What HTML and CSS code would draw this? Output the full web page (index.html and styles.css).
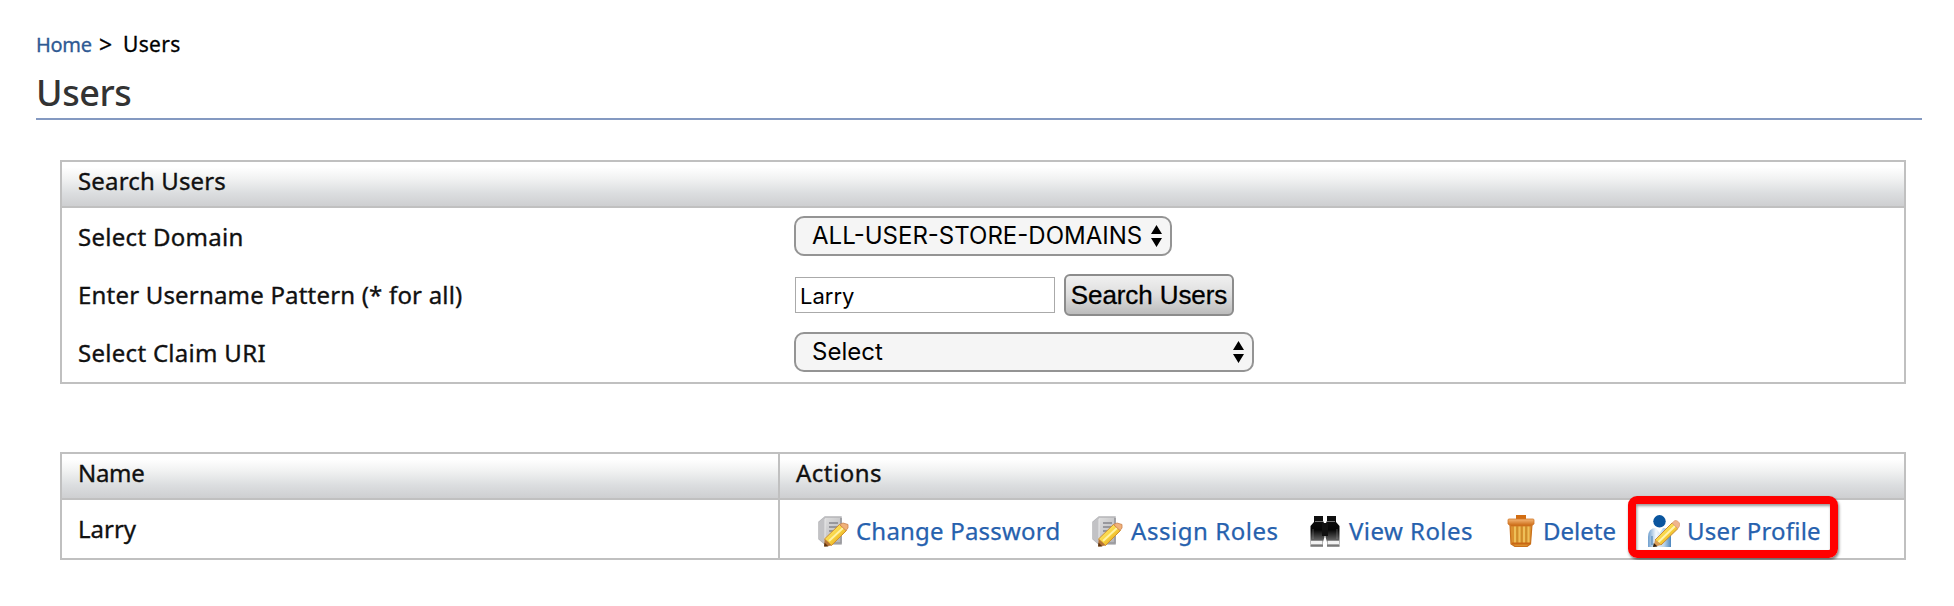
FILE: index.html
```
<!DOCTYPE html>
<html lang="en">
<head>
<meta charset="utf-8">
<title>Users</title>
<link rel="stylesheet" href="styles.css">
</head>
<body>
<svg class="defs" aria-hidden="true">
  <defs>
    <linearGradient id="paper" x1="0" y1="0" x2="1" y2="1"><stop offset="0" stop-color="#e6e6e6"/><stop offset="1" stop-color="#b0b0b4"/></linearGradient>
    <linearGradient id="pencil" x1="0" y1="0" x2="1" y2="1"><stop offset="0" stop-color="#fff3a0"/><stop offset=".5" stop-color="#f8d33c"/><stop offset="1" stop-color="#d98a18"/></linearGradient>
    <linearGradient id="tube" x1="0" y1="0" x2="0" y2="1"><stop offset="0" stop-color="#111"/><stop offset=".45" stop-color="#050505"/><stop offset="1" stop-color="#9c9c9c"/></linearGradient>
    <linearGradient id="lid" x1="0" y1="0" x2="0" y2="1"><stop offset="0" stop-color="#f5b878"/><stop offset="1" stop-color="#c8640c"/></linearGradient>
    <linearGradient id="coat" x1="0" y1="0" x2="1" y2="0"><stop offset="0" stop-color="#6f9fce"/><stop offset=".35" stop-color="#f4f9fd"/><stop offset=".7" stop-color="#b9d3ea"/><stop offset="1" stop-color="#4b86bf"/></linearGradient>
    <symbol id="edit" viewBox="0 0 32 32">
      <path d="M8 2H24V29H8L2 24V7Z" fill="url(#paper)" stroke="#b5b5b8" stroke-width="1.5"/>
      <path d="M8 2V29L2 24V7Z" fill="#c2c2c5"/>
      <path d="M8 4V26" stroke="#e8e8e8"/>
      <path d="M12 8H21M12 12H21M12 16H18" stroke="#85858c" stroke-width="1.5"/>
      <path d="M24 3V28H9" fill="none" stroke="#98989c" stroke-width="1.5"/>
      <path d="M7.500 24L22.500 9.500L29.500 15.500L14.500 30.500Z" fill="url(#pencil)" stroke="#d0912e"/>
      <path d="M12 26L26 13" stroke="#fff2a4" stroke-width="2"/>
      <path d="M22.500 9.500L26 8L31 9.500L31 13L29 15.500Z" fill="#f0b17a" stroke="#c9824e" stroke-width=".8"/>
      <path d="M7.500 24L14.500 30.500L7.500 31.500Z" fill="#b87535"/><path d="M7.500 27.500L11.500 31.500H7Z" fill="#5e3410"/>
    </symbol>
    <symbol id="view" viewBox="0 0 32 32">
      <path d="M5 1H14V6L15.500 9V22L14 27V31.500H1.500V11L5 7Z" fill="url(#tube)"/>
      <path d="M27 1H18V6L16.500 9V22L18 27V31.500H30.500V11L27 7Z" fill="url(#tube)"/>
      <path d="M13 8H19V21H13Z" fill="#111"/><path d="M6 6.500H14M18 6.500H26" stroke="#777"/>
      <path d="M2 27.500H13.500M18.500 27.500H30" stroke="#f2f2f2" stroke-width="3.500"/>
      <path d="M1.500 31H14M18 31H30.500" stroke="#5e5e5e" stroke-width="1.200"/>
      <path d="M4 14V24M28 14V24" stroke="#aaa" stroke-opacity=".4"/>
    </symbol>
    <symbol id="trash" viewBox="0 0 28 32">
      <path d="M9 0H19V5H9Z" fill="#d26d12"/>
      <path d="M3 9H25L23.500 29L20 31.500H8L4 29Z" fill="#dc912f" stroke="#c9701b" stroke-width="1.200"/>
      <path d="M8 11V28M12.500 11V28M17 11V28M21.500 11V28" stroke="#eebf58" stroke-width="2"/>
      <path d="M10.200 11V28M14.700 11V28M19.200 11V28" stroke="#c98d2b"/>
      <path d="M1 5Q1 4 2 4H26Q27 4 27 5V9L24 11H4L1 9Z" fill="url(#lid)" stroke="#d1772a" stroke-width=".8"/>
      <path d="M5 28.500H23" stroke="#c96714" stroke-width="2"/>
    </symbol>
    <symbol id="profile" viewBox="0 0 32 32">
      <path d="M0 32V22Q0 13 8 13H16Q23 14 23 21V32Z" fill="url(#coat)"/>
      <path d="M4 30V21" stroke="#3f7ab2" stroke-width="1"/>
      <path d="M8 13H15L11.500 18Z" fill="#fff"/>
      <circle cx="11.500" cy="6.300" r="6.200" fill="#0a559e"/>
      <path d="M7 25L24 8L30 13.500L13 30Z" fill="url(#pencil)" stroke="#c98c35"/>
      <path d="M10.500 27L27 11" stroke="#fff3ae" stroke-width="2"/>
      <path d="M24 8L27 5.500Q31 5.500 32 10L30 13.500Z" fill="#f1b58c" stroke="#dba27e" stroke-width=".8"/>
      <path d="M7 25L13 30L5.500 32Z" fill="#d99c55"/><path d="M5.800 28L9.500 31.500L5 32Z" fill="#33200f"/>
    </symbol>
  </defs>
</svg>
<nav class="crumbs"><a class="crumb-home" href="#">Home</a><span class="crumb-sep">&gt;</span><span class="crumb-here">Users</span></nav>
<h1 class="title">Users</h1>
<main class="content">
  <section class="panel">
    <h2 class="bar cell t-search">Search Users</h2>
    <div class="row"><label class="cell t-domain">Select Domain</label>
      <div class="select domain"><span>ALL-USER-STORE-DOMAINS</span><svg class="arrows" viewBox="0 0 11 22"><path d="M5.500 0L11 9H0ZM5.500 22L0 13H11Z"/></svg></div></div>
    <div class="row"><label class="cell t-pattern">Enter Username Pattern (* for all)</label>
      <input class="field" type="text" value="Larry"><button class="button">Search Users</button></div>
    <div class="row"><label class="cell t-claim">Select Claim URI</label>
      <div class="select claim"><span>Select</span><svg class="arrows" viewBox="0 0 11 22"><path d="M5.500 0L11 9H0ZM5.500 22L0 13H11Z"/></svg></div></div>
  </section>
  <section class="panel users">
    <div class="bar heads"><div class="cell name t-name">Name</div><div class="cell t-actions">Actions</div></div>
    <div class="user"><div class="cell name">Larry</div>
      <div class="actions">
        <a class="action password" href="#"><svg class="icon"><use href="#edit"/></svg><span>Change Password</span></a>
        <a class="action assign" href="#"><svg class="icon"><use href="#edit"/></svg><span>Assign Roles</span></a>
        <a class="action view" href="#"><svg class="icon"><use href="#view"/></svg><span>View Roles</span></a>
        <a class="action delete" href="#"><svg class="icon"><use href="#trash"/></svg><span>Delete</span></a>
        <a class="action profile" href="#"><svg class="icon"><use href="#profile"/></svg><span>User Profile</span><i class="highlight"></i></a>
      </div>
    </div>
  </section>
</main>
</body>
</html>
```
FILE: styles.css
```
* { box-sizing: border-box; }
body {
  margin: 0;
  padding: 30px 32px 0 36px;
  background: #fff;
  color: #111;
  font: 24px/30px "Noto Sans", "Open Sans", sans-serif;
  white-space: nowrap;
}
.defs { position: absolute; width: 0; height: 0; }
a { text-decoration: none; }
.crumbs { display: flex; height: 30px; font-size: 20px; line-height: 29px; -webkit-text-stroke: 0.3px; color: #000; }
.crumb-home { width: 63px; letter-spacing: -0.3px; color: #2f5a93; }
.crumb-sep { width: 24px; font-size: 23px; }
.crumb-here { font-size: 21px; letter-spacing: 0.3px; }
.title {
  margin: 0;
  height: 60px;
  padding-top: 11px;
  border-bottom: 2px solid #8499c1;
  font-size: 36px;
  font-weight: 500;
  letter-spacing: -0.4px;
  line-height: 44px;
  color: #333;
}
.content { padding: 40px 16px 0 24px; }
.panel { border: 2px solid #c0c0c0; }
.bar {
  height: 46px;
  margin: 0;
  border-bottom: 2px solid #c0c0c0;
  background: linear-gradient(#fff 12%, #f0f1f1 40%, #dcdee0 70%, #cecfd1);
  font-size: 24px;
  font-weight: 400;
  line-height: 38px;
}
.cell { padding-left: 16px; -webkit-text-stroke: 0.35px; }
.t-search { letter-spacing: 0.15px; }
.t-domain { letter-spacing: 0.29px; }
.t-pattern { letter-spacing: 0.19px; }
.t-claim { letter-spacing: 0.29px; }
.t-name { letter-spacing: -0.3px; }
.t-actions { letter-spacing: 0.5px; }
.row { display: flex; align-items: center; height: 58px; }
.row .cell { width: 733px; flex: none; }
.select {
  display: flex;
  align-items: center;
  justify-content: space-between;
  height: 40px;
  margin: 0 0 2px -1px;
  padding: 0 8px 0 16px;
  border: 2px solid #949494;
  border-radius: 10px;
  background: #f5f5f5;
  color: #000;
  font: 24px/36px Inter, sans-serif;
}
.domain { width: 378px; }
.claim { width: 460px; }
.arrows { width: 11px; height: 22px; }
.field {
  width: 260px;
  height: 36px;
  margin-right: 9px;
  padding: 2px 4px 0;
  border: 1px solid #aaa;
  color: #000;
  font: 22px Inter, sans-serif;
}
.button {
  width: 170px;
  height: 42px;
  padding: 0;
  border: 2px solid #8c8c8c;
  border-radius: 6px;
  background: linear-gradient(#f0f0f0, #dedede 50%, #bcbcbc);
  color: #000;
  font: 26px/34px "Liberation Sans", Arial, sans-serif;
  letter-spacing: -0.1px;
  -webkit-text-stroke: 0.3px;
}
.users { margin-top: 68px; }
.heads, .user { display: flex; }
.name { width: 718px; flex: none; border-right: 2px solid #c0c0c0; }
.user { height: 58px; line-height: 57px; }
.actions { display: flex; align-items: center; padding: 4px 0 0 37px; }
.action { position: relative; display: flex; align-items: center; color: #2661ae; line-height: 32px; -webkit-text-stroke: 0.25px; }
.icon { width: 32px; height: 32px; margin-right: 7px; flex: none; }
.password { width: 274px; letter-spacing: 0.2px; }
.assign { width: 218px; letter-spacing: 0.55px; }
.view { width: 198px; letter-spacing: 0.45px; }
.assign .icon, .view .icon { margin-right: 8px; }
.delete .icon { width: 28px; margin-right: 8px; }
.delete { width: 141px; }
.profile { letter-spacing: 0.2px; }
.highlight {
  position: absolute;
  left: -20px;
  top: -19px;
  width: 210px;
  height: 62px;
  border: 8px solid #f00;
  border-radius: 9px;
  box-shadow: 1px 2px 3px rgba(0, 0, 0, .5), inset 1px 2px 3px rgba(0, 0, 0, .4);
}
```
